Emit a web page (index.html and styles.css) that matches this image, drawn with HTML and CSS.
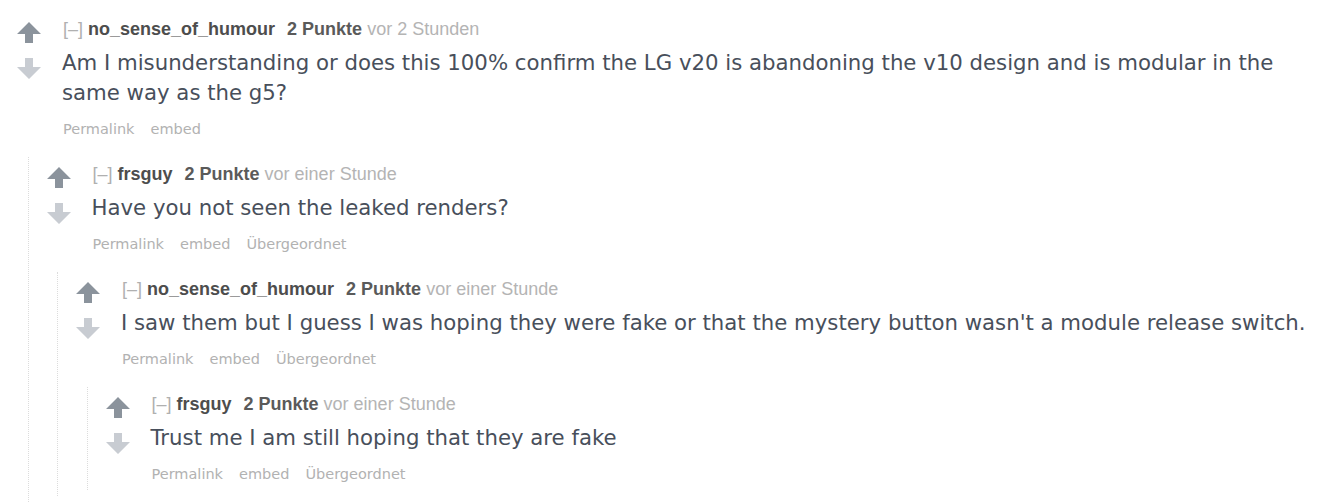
FILE: index.html
```html
<!DOCTYPE html>
<html lang="de">
<head>
<meta charset="utf-8">
<title>Kommentare</title>
<link rel="stylesheet" href="styles.css">
</head>
<body>
<div class="commentarea">
  <div class="comment top">
    <div class="row">
      <div class="midcol">
        <svg class="arrow up" viewBox="0 0 24 21" width="24" height="21"><polygon points="12,0 24,12 16,12 16,21 8,21 8,12 0,12"/></svg>
        <svg class="arrow down" viewBox="0 0 24 21" width="24" height="21"><polygon points="8,0 16,0 16,9 24,9 12,21 0,9 8,9"/></svg>
      </div>
      <div class="entry">
        <p class="tagline"><span class="expand">[–]</span> <span class="author">no_sense_of_humour</span><span class="score">2 Punkte</span> <span class="time">vor 2 Stunden</span></p>
        <div class="md"><p>Am I misunderstanding or does this 100% confirm the LG v20 is abandoning the v10 design and is modular in the same way as the g5?</p></div>
        <ul class="buttons"><li>Permalink</li><li>embed</li></ul>
      </div>
    </div>
    <div class="comment child">
      <div class="row">
        <div class="midcol">
          <svg class="arrow up" viewBox="0 0 24 21" width="24" height="21"><polygon points="12,0 24,12 16,12 16,21 8,21 8,12 0,12"/></svg>
          <svg class="arrow down" viewBox="0 0 24 21" width="24" height="21"><polygon points="8,0 16,0 16,9 24,9 12,21 0,9 8,9"/></svg>
        </div>
        <div class="entry">
          <p class="tagline"><span class="expand">[–]</span> <span class="author">frsguy</span><span class="score">2 Punkte</span> <span class="time">vor einer Stunde</span></p>
          <div class="md"><p>Have you not seen the leaked renders?</p></div>
          <ul class="buttons"><li>Permalink</li><li>embed</li><li>Übergeordnet</li></ul>
        </div>
      </div>
      <div class="comment child">
        <div class="row">
          <div class="midcol">
            <svg class="arrow up" viewBox="0 0 24 21" width="24" height="21"><polygon points="12,0 24,12 16,12 16,21 8,21 8,12 0,12"/></svg>
            <svg class="arrow down" viewBox="0 0 24 21" width="24" height="21"><polygon points="8,0 16,0 16,9 24,9 12,21 0,9 8,9"/></svg>
          </div>
          <div class="entry">
            <p class="tagline"><span class="expand">[–]</span> <span class="author">no_sense_of_humour</span><span class="score">2 Punkte</span> <span class="time">vor einer Stunde</span></p>
            <div class="md"><p>I saw them but I guess I was hoping they were fake or that the mystery button wasn't a module release switch.</p></div>
            <ul class="buttons"><li>Permalink</li><li>embed</li><li>Übergeordnet</li></ul>
          </div>
        </div>
        <div class="comment child">
          <div class="row">
            <div class="midcol">
              <svg class="arrow up" viewBox="0 0 24 21" width="24" height="21"><polygon points="12,0 24,12 16,12 16,21 8,21 8,12 0,12"/></svg>
              <svg class="arrow down" viewBox="0 0 24 21" width="24" height="21"><polygon points="8,0 16,0 16,9 24,9 12,21 0,9 8,9"/></svg>
            </div>
            <div class="entry">
              <p class="tagline"><span class="expand">[–]</span> <span class="author">frsguy</span><span class="score">2 Punkte</span> <span class="time">vor einer Stunde</span></p>
              <div class="md"><p>Trust me I am still hoping that they are fake</p></div>
              <ul class="buttons"><li>Permalink</li><li>embed</li><li>Übergeordnet</li></ul>
            </div>
          </div>
        </div>
      </div>
    </div>
  </div>
</div>
</body>
</html>
```

FILE: styles.css
```css
html, body {
  margin: 0;
  padding: 0;
  background: #ffffff;
}

body {
  font-family: "DejaVu Sans", Verdana, sans-serif;
  overflow: hidden;
}

.commentarea {
  padding: 12px 8px 0 0;
  margin-left: -1px;
}

.comment {
  padding: 7px 0 6px 0;
}

.comment.child {
  margin-left: 28.5px;
  margin-top: 18.5px;
  border-left: 1px dotted #dcdcdc;
}

.row {
  display: flex;
  align-items: flex-start;
}

.midcol {
  flex: none;
  width: 24px;
  margin-left: 18px;
  margin-top: 3.3px;
  display: flex;
  flex-direction: column;
  gap: 15px;
}

.arrow {
  display: block;
}

.arrow.up {
  fill: #8b939c;
}

.arrow.down {
  fill: #c8ccd2;
}

.entry {
  flex: 1;
  min-width: 0;
  margin-left: 21px;
}

.tagline {
  margin: 0 0 0 1px;
  font-family: "Liberation Sans", Arial, sans-serif;
  font-size: 18px;
  line-height: 20px;
  color: #aaaaaa;
  white-space: nowrap;
}

.expand {
  color: #b0b0b0;
}

.author {
  font-weight: bold;
  color: #4d4d4d;
}

.score {
  font-weight: bold;
  color: #5a5a5a;
  margin-left: 12px;
}

.time {
  color: #b4b4b4;
}

.md {
  margin-top: 9px;
}

.md p {
  margin: 0;
  font-size: 21.25px;
  line-height: 30px;
  color: #484f5b;
}

.buttons {
  list-style: none;
  margin: 10.5px 0 0 1px;
  padding: 0;
  display: flex;
  gap: 16px;
  font-size: 14.5px;
  line-height: 20px;
  color: #b2b2b2;
}
```
